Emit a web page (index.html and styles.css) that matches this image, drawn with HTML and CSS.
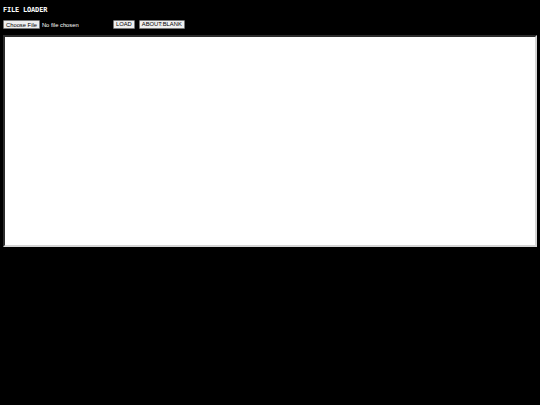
FILE: index.html
```html
<!DOCTYPE html>
<html>
<head>
<meta charset="utf-8">
<link rel="stylesheet" href="styles.css">
</head>
<body>
<h1 class="title">FILE LOADER</h1>
<div class="controls">
  <input class="file" type="file">
  <button class="btn">LOAD</button>
  <button class="btn">ABOUT:BLANK</button>
</div>
<div class="frame"></div>
</body>
</html>
```
FILE: styles.css
```css
html, body {
  background: #000;
}
body {
  margin: 3px;
  color: #fff;
  font-family: "Liberation Sans", Arial, sans-serif;
}
.title {
  margin: 3px 0 0 0;
  font-family: "DejaVu Sans Mono", monospace;
  font-size: 7px;
  font-weight: bold;
  line-height: 9px;
  letter-spacing: -0.2px;
}
.controls {
  display: flex;
  align-items: center;
  margin-top: 5px;
  height: 9px;
}
.file {
  width: 106px;
  font-family: "Liberation Sans", Arial, sans-serif;
  font-size: 5.8px;
  color: #fff;
  margin: 0;
}
.file::file-selector-button {
  font-family: "Liberation Sans", Arial, sans-serif;
  font-size: 5.8px;
  padding: 0 2px;
  height: 9px;
  margin-right: 2px;
  border: 1px solid #767676;
  background: #efefef;
  color: #000;
  border-radius: 1px;
}
.btn {
  font-family: "Liberation Sans", Arial, sans-serif;
  font-size: 5.8px;
  height: 9px;
  padding: 0 2px;
  margin: 0 0 0 4px;
  border: 1px solid #767676;
  background: #efefef;
  color: #000;
  line-height: 7px;
  border-radius: 1px;
}
.frame {
  margin-top: 6px;
  height: 208px;
  background: #fff;
  border: 2px inset;
  border-top-color: #808080;
  border-left-color: #808080;
  border-right-color: #d4d4d4;
  border-bottom-color: #d4d4d4;
}
```
